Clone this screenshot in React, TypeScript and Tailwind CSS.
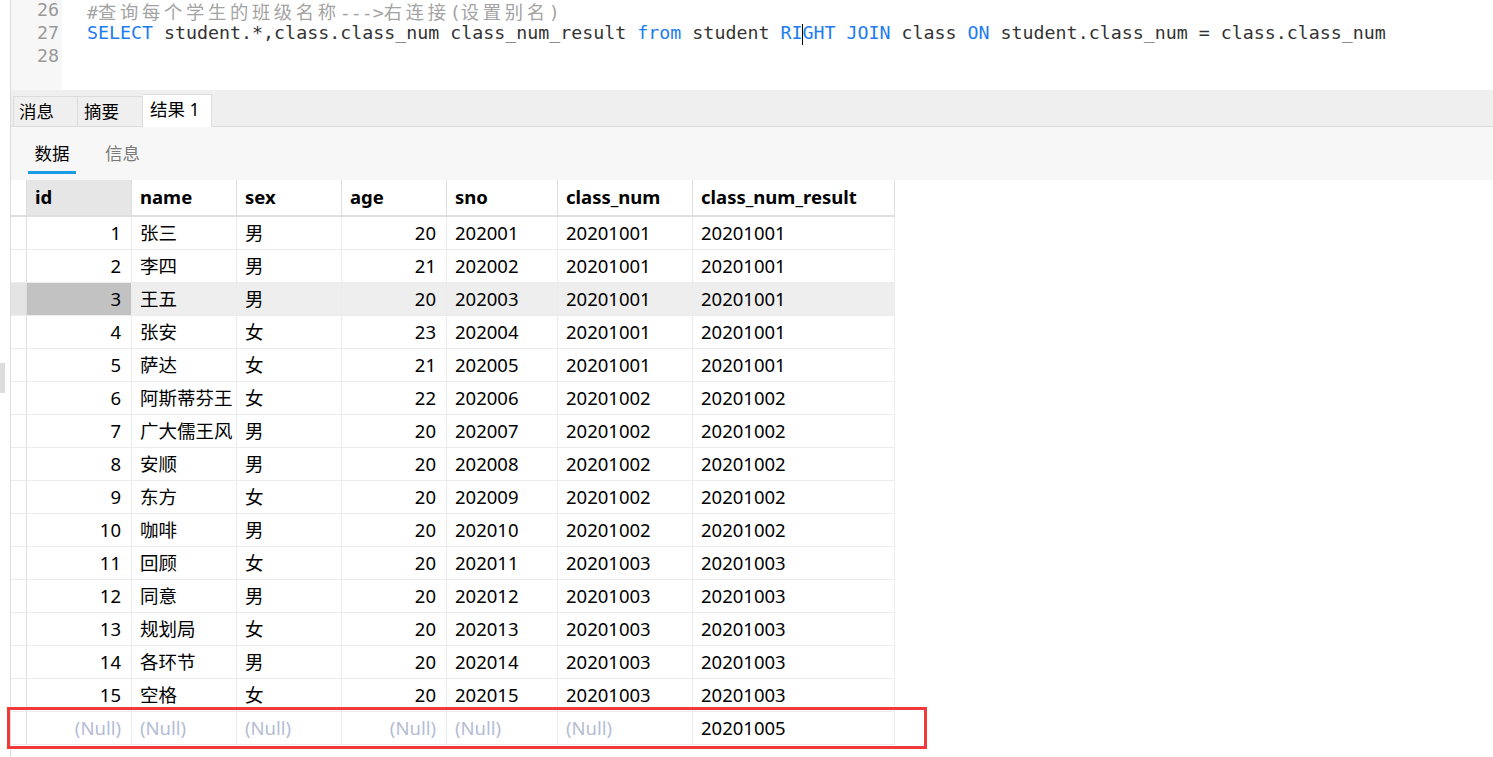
import React from "react";

// 结果表格的数据
const rows: (string | number | null)[][] = [
  [1, "张三", "男", 20, "202001", "20201001", "20201001"],
  [2, "李四", "男", 21, "202002", "20201001", "20201001"],
  [3, "王五", "男", 20, "202003", "20201001", "20201001"],
  [4, "张安", "女", 23, "202004", "20201001", "20201001"],
  [5, "萨达", "女", 21, "202005", "20201001", "20201001"],
  [6, "阿斯蒂芬王", "女", 22, "202006", "20201002", "20201002"],
  [7, "广大儒王风", "男", 20, "202007", "20201002", "20201002"],
  [8, "安顺", "男", 20, "202008", "20201002", "20201002"],
  [9, "东方", "女", 20, "202009", "20201002", "20201002"],
  [10, "咖啡", "男", 20, "202010", "20201002", "20201002"],
  [11, "回顾", "女", 20, "202011", "20201003", "20201003"],
  [12, "同意", "男", 20, "202012", "20201003", "20201003"],
  [13, "规划局", "女", 20, "202013", "20201003", "20201003"],
  [14, "各环节", "男", 20, "202014", "20201003", "20201003"],
  [15, "空格", "女", 20, "202015", "20201003", "20201003"],
  [null, null, null, null, null, null, "20201005"],
];

const cols = [
  { name: "id", w: "w-[105px]", right: true },
  { name: "name", w: "w-[105px]" },
  { name: "sex", w: "w-[105px]" },
  { name: "age", w: "w-[105px]", right: true },
  { name: "sno", w: "w-[111px]" },
  { name: "class_num", w: "w-[135px]" },
  { name: "class_num_result", w: "w-[202px]" },
];

const mono = "font-['DejaVu_Sans_Mono','Liberation_Mono',monospace]";
const sans = "font-['Noto_Sans','Noto_Sans_CJK_SC',sans-serif]";

function Kw({ children }: { children: React.ReactNode }) {
  return <span className="text-[#1d7cf2]">{children}</span>;
}

function Cjk({ children }: { children: React.ReactNode }) {
  return <span className="font-['Noto_Sans_CJK_SC',sans-serif] tracking-[3.7px]">{children}</span>;
}

function Editor() {
  return (
    <div className="flex h-[90px] overflow-hidden bg-white">
      {/* 行号 */}
      <div className={`w-[51px] bg-[#f7f7f7] pr-[3px] text-right text-[18.3px] leading-[23px] text-[#999] ${mono}`}>
        <div className="-mt-[2px]">26</div>
        <div>27</div>
        <div>28</div>
      </div>
      <div className={`pl-[25px] text-[18.3px] leading-[23px] text-[#333] whitespace-pre ${mono}`}>
        <div className="text-[#a3a3a3] h-[21px] pt-px leading-[20px]">
          #<Cjk>查询每个学生的班级名称</Cjk>---&gt;<Cjk>右连接</Cjk>(<Cjk>设置别名</Cjk>)
        </div>
        <div>
          <Kw>SELECT</Kw> student.*,class.class_num class_num_result <Kw>from</Kw> student <Kw>RI</Kw>
          <span className="relative inline-block w-0 h-[18px] align-middle">
            <span className="absolute left-0 -top-[1px] h-[21px] w-px bg-black" />
          </span>
          <Kw>GHT</Kw> <Kw>JOIN</Kw> class <Kw>ON</Kw> student.class_num = class.class_num
        </div>
        <div>&nbsp;</div>
      </div>
    </div>
  );
}

function Tabs() {
  return (
    <div className={`h-[37px] bg-[#efefef] border-b border-[#dcdcdc] flex items-end pl-[2px] ${sans}`}>
      <div className="w-[65px] h-[30px] border border-b-0 border-[#dcdcdc] text-[17.5px] leading-[28px] pl-[5px] text-black">消息</div>
      <div className="w-[65px] h-[30px] border border-b-0 border-l-0 border-[#dcdcdc] text-[17.5px] leading-[28px] pl-[6px] text-black">摘要</div>
      <div className="w-[69px] h-[33px] -mb-px bg-white border border-b-0 border-l-0 border-[#dcdcdc] text-[17.5px] leading-[29px] pl-[7px] text-black">结果 1</div>
    </div>
  );
}

function SubTabs() {
  return (
    <div className={`h-[53px] bg-[#f7f7f7] flex items-start pl-[17px] gap-[29px] ${sans} text-[17.5px]`}>
      <div className="w-[48px] pt-[14px] flex flex-col items-center">
        <span className="text-black leading-[24px]">数据</span>
        <span className="mt-[6px] h-[3px] w-[48px] bg-[#1a9be6]" />
      </div>
      <div className="pt-[14px] leading-[24px] text-[#7a7a7a]">信息</div>
    </div>
  );
}

function Grid() {
  return (
    <div className={`${sans} text-[18.5px] text-black w-fit`}>
      {/* 表头 */}
      <div className="flex h-[37px] border-b-2 border-[#dedede]">
        <div className="w-[16px] border-r border-[#dedede]" />
        {cols.map((c, i) => (
          <div
            key={c.name}
            className={`${c.w} border-r border-[#dedede] px-[8px] font-bold leading-[33px] ${i === 0 ? "bg-[#e6e6e6]" : "bg-white"}`}
          >
            {c.name}
          </div>
        ))}
      </div>
      {rows.map((r, ri) => {
        const sel = ri === 2;
        const isLast = ri === rows.length - 1;
        return (
          <div key={ri} className={`relative flex h-[33px] border-b border-[#ececec] ${sel ? "bg-[#eeeeee]" : "bg-white"}`}>
            <div className={`w-[16px] border-r border-[#dedede] ${sel ? "bg-[#e4e4e4]" : "bg-white"}`} />
            {r.map((v, ci) => {
              const c = cols[ci];
              const isNull = v === null;
              return (
                <div
                  key={ci}
                  className={`${c.w} border-r border-[#ececec] px-[10px] leading-[32px] whitespace-nowrap ${c.right ? "text-right" : "text-left pl-[8px]"} ${isNull ? "text-[#b4bdd4]" : ""} ${sel && ci === 0 ? "bg-[#c2c2c2]" : ""}`}
                >
                  {isNull ? "(Null)" : v}
                </div>
              );
            })}
            {isLast && (
              <div className="absolute -left-[4px] -top-[5px] w-[920px] h-[42px] border-[3px] border-[#f03a3a] pointer-events-none" />
            )}
          </div>
        );
      })}
    </div>
  );
}

export default function App() {
  return (
    <div className="relative w-[1493px] h-[757px] bg-white overflow-hidden pl-[10px]">
      {/* 左侧的滚动条残影 */}
      <div className="absolute left-0 top-[363px] w-[5px] h-[30px] bg-[#dcdcdc]" />
      <div className="h-full border-l border-[#dcdcdc] flex flex-col">
        <Editor />
        <Tabs />
        <SubTabs />
        <Grid />
      </div>
    </div>
  );
}
